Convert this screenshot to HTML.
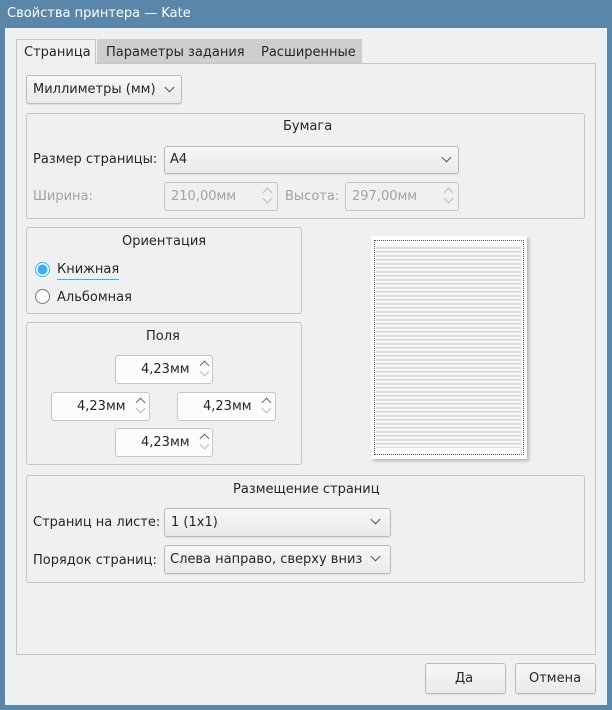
<!DOCTYPE html><html><head><meta charset="utf-8"><style>
*{box-sizing:border-box;margin:0;padding:0}
body{width:612px;height:710px;background:#5a86aa;font-family:"DejaVu Sans","Liberation Sans",sans-serif;font-size:13px;color:#232627;position:relative;overflow:hidden}
.a{position:absolute}
.t{white-space:nowrap}
.win{left:5px;top:28px;width:602px;height:677px;background:#eff0f1}
.pane{left:16px;top:63px;width:580px;height:592px;border:1px solid #c4c6c8;background:#eff0f1}
.grp{border:1px solid #c4c6c8;border-radius:3px}
.btn{border:1px solid #b8babc;border-radius:3px;background:linear-gradient(#f6f7f7,#e9eaeb);box-shadow:0 1px 1px rgba(0,0,0,.08)}
.spin{border:1px solid #c4c6c8;border-radius:3px;background:#fcfcfc}
.dis{color:#a0a2a4}
.chev{position:absolute;width:7px;height:7px;border-right:1.2px solid #555;border-bottom:1.2px solid #555;transform:rotate(45deg)}
.up,.dn{position:absolute;width:7px;height:7px;border-left:1.2px solid #666;border-top:1.2px solid #666}
.up{transform:rotate(45deg)}.dn{transform:rotate(225deg);border-color:#bbb}
</style></head><body>
<div class="a t" style="left:7px;top:6px;color:#fff;font-size:13px">Свойства принтера — Kate</div>
<div class="a win"></div>
<div class="a" style="left:16px;top:39px;width:80px;height:25px;background:#eff0f1;border:1px solid #c4c6c8;border-bottom:none;z-index:2"></div>
<div class="a t" style="left:24px;top:45px;z-index:3">Страница</div>
<div class="a" style="left:97px;top:39px;width:265px;height:24px;background:#cdcecf"></div>
<div class="a t" style="left:106px;top:45px">Параметры задания</div>
<div class="a t" style="left:261px;top:45px">Расширенные</div>
<div class="a pane"></div>
<div class="a btn" style="left:26px;top:75px;width:156px;height:29px"></div>
<div class="a t" style="left:33px;top:82px">Миллиметры (мм)</div>
<div class="chev" style="left:166px;top:84px"></div>

<div class="a grp" style="left:26px;top:113px;width:559px;height:106px"></div>
<div class="a t" style="left:283px;top:119px">Бумага</div>
<div class="a t" style="left:33px;top:152px">Размер страницы:</div>
<div class="a btn" style="left:164px;top:146px;width:295px;height:28px"></div>
<div class="a t" style="left:170px;top:152px">A4</div>
<div class="chev" style="left:443px;top:154px"></div>
<div class="a t dis" style="left:33px;top:189px">Ширина:</div>
<div class="a spin" style="left:164px;top:182px;width:114px;height:29px;background:#eff0f1"></div>
<div class="a t dis" style="left:171px;top:189px">210,00мм</div>
<div class="up" style="left:264px;top:189px;border-color:#bbb"></div><div class="dn" style="left:264px;top:195px"></div>
<div class="a t dis" style="left:285px;top:189px">Высота:</div>
<div class="a spin" style="left:345px;top:182px;width:114px;height:29px;background:#eff0f1"></div>
<div class="a t dis" style="left:352px;top:189px">297,00мм</div>
<div class="up" style="left:445px;top:189px;border-color:#bbb"></div><div class="dn" style="left:445px;top:195px"></div>

<div class="a grp" style="left:26px;top:227px;width:276px;height:87px"></div>
<div class="a t" style="left:122px;top:234px">Ориентация</div>
<div class="a" style="left:35px;top:262px;width:15px;height:15px;border-radius:50%;border:1px solid #3daee9;background:radial-gradient(#3daee9 4.5px,#fff 5.5px)"></div>
<div class="a t" style="left:57px;top:262px;border-bottom:1px solid #3daee9;padding-bottom:2px">Книжная</div>
<div class="a" style="left:35px;top:289px;width:15px;height:15px;border-radius:50%;border:1px solid #777;background:#fcfcfc"></div>
<div class="a t" style="left:57px;top:290px">Альбомная</div>

<div class="a grp" style="left:26px;top:322px;width:276px;height:143px"></div>
<div class="a t" style="left:146px;top:329px">Поля</div>
<div class="a spin" style="left:115px;top:355px;width:98px;height:29px"></div><div class="a t" style="left:141px;top:362px">4,23мм</div><div class="up" style="left:201px;top:362px"></div><div class="dn" style="left:201px;top:368px"></div>
<div class="a spin" style="left:51px;top:392px;width:99px;height:29px"></div><div class="a t" style="left:77px;top:399px">4,23мм</div><div class="up" style="left:137px;top:399px"></div><div class="dn" style="left:137px;top:405px"></div>
<div class="a spin" style="left:177px;top:392px;width:99px;height:29px"></div><div class="a t" style="left:203px;top:399px">4,23мм</div><div class="up" style="left:263px;top:399px"></div><div class="dn" style="left:263px;top:405px"></div>
<div class="a spin" style="left:115px;top:428px;width:98px;height:29px"></div><div class="a t" style="left:141px;top:435px">4,23мм</div><div class="up" style="left:201px;top:435px"></div><div class="dn" style="left:201px;top:441px"></div>

<div class="a" style="left:371px;top:236px;width:156px;height:223px;background:#fff;box-shadow:2px 2px 3px rgba(0,0,0,.25)">
<div class="a" style="left:3px;top:4px;width:150px;height:215px;border:1px dotted #555"></div>
<div class="a" style="left:5px;top:9px;width:145px;height:203px;background:repeating-linear-gradient(#fff 0,#fff 1.5px,#e0e0e0 1.5px,#e0e0e0 4px)"></div>
</div>

<div class="a grp" style="left:26px;top:475px;width:559px;height:108px"></div>
<div class="a t" style="left:233px;top:482px">Размещение страниц</div>
<div class="a t" style="left:33px;top:515px">Страниц на листе:</div>
<div class="a btn" style="left:164px;top:508px;width:227px;height:29px"></div>
<div class="a t" style="left:171px;top:515px">1 (1x1)</div>
<div class="chev" style="left:372px;top:516px"></div>
<div class="a t" style="left:33px;top:553px">Порядок страниц:</div>
<div class="a btn" style="left:164px;top:545px;width:227px;height:29px"></div>
<div class="a t" style="left:170px;top:552px">Слева направо, сверху вниз</div>
<div class="chev" style="left:372px;top:553px"></div>

<div class="a btn" style="left:425px;top:663px;width:81px;height:31px"></div>
<div class="a t" style="left:455px;top:671px">Да</div>
<div class="a btn" style="left:515px;top:663px;width:81px;height:31px"></div>
<div class="a t" style="left:529px;top:671px">Отмена</div>
</body></html>
